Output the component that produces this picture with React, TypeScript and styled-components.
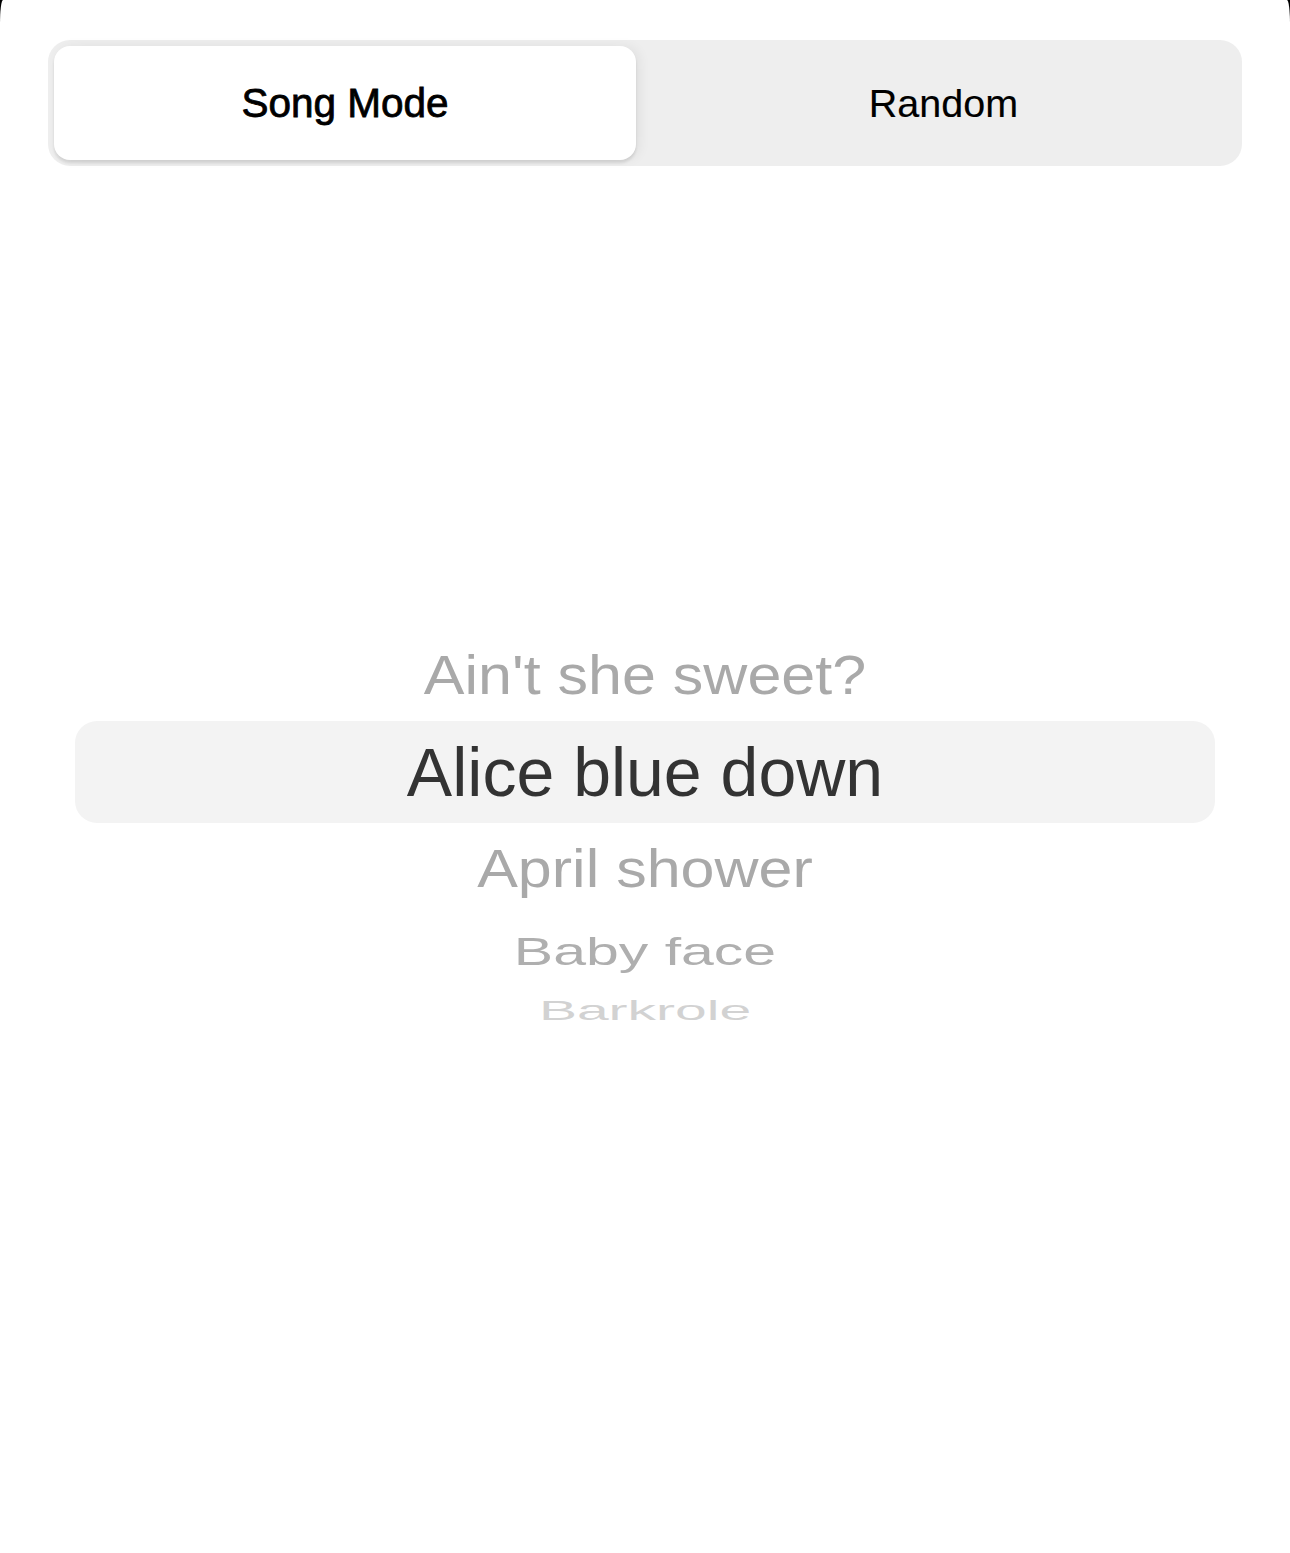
import React from "react";
import styled, { createGlobalStyle } from "styled-components";

const Global = createGlobalStyle`
  html, body { margin: 0; padding: 0; background: #000; }
  body { font-family: "Liberation Sans", Arial, sans-serif; }
  #root { min-height: 100vh; }
`;

const Sheet = styled.div`
  min-height: 1553px;
  background: #ffffff;
  border-top-left-radius: 3px 24px;
  border-top-right-radius: 3px 24px;
  display: flex;
  flex-direction: column;
  padding: 40px 48px 0 48px;
  box-sizing: border-box;
`;

const Segmented = styled.div`
  display: grid;
  grid-template-columns: 1fr 1fr;
  height: 126px;
  padding: 6px;
  box-sizing: border-box;
  background: #eeeeee;
  border-radius: 22px;
`;

const Segment = styled.div<{ $active?: boolean }>`
  display: flex;
  align-items: center;
  justify-content: center;
  border-radius: 16px;
  font-size: ${(p) => (p.$active ? "40.5px" : "39.5px")};
  font-weight: 400;
  -webkit-text-stroke: ${(p) => (p.$active ? "0.8px #000" : "0.15px #000")};
  color: #000;
  background: ${(p) => (p.$active ? "#ffffff" : "transparent")};
  box-shadow: ${(p) =>
    p.$active
      ? "0 3px 3px rgba(0,0,0,0.10), 4px 0 12px rgba(0,0,0,0.06)"
      : "none"};
  margin-right: ${(p) => (p.$active ? "9px" : "0")};
  padding-left: ${(p) => (p.$active ? "0" : "6px")};
`;

const Picker = styled.div`
  display: flex;
  flex-direction: column;
  margin: 463px 27px 0 27px;
`;

const Row = styled.div<{ $h: number; $selected?: boolean }>`
  height: ${(p) => p.$h}px;
  display: flex;
  align-items: center;
  justify-content: center;
  border-radius: 22px;
  background: ${(p) => (p.$selected ? "#f3f3f3" : "transparent")};
`;

const Label = styled.span<{ $size: number; $sy: number; $color: string }>`
  display: inline-block;
  font-size: ${(p) => p.$size}px;
  line-height: 1;
  color: ${(p) => p.$color};
  transform: scaleY(${(p) => p.$sy});
  white-space: nowrap;
`;

const rows = [
  { text: "Ain't she sweet?", h: 92, size: 61, sy: 0.92, color: "#a9a9a9" },
  { text: "Alice blue down", h: 102, size: 68, sy: 1.0, color: "#333333", selected: true },
  { text: "April shower", h: 92, size: 61, sy: 0.87, color: "#a9a9a9" },
  { text: "Baby face", h: 72, size: 59, sy: 0.67, color: "#afafaf" },
  { text: "Barkrole", h: 46, size: 57, sy: 0.5, color: "#d2d2d2" },
];

export default function App() {
  return (
    <>
      <Global />
      <Sheet>
        <Segmented>
          <Segment $active>Song Mode</Segment>
          <Segment>Random</Segment>
        </Segmented>
        <Picker>
          {rows.map((r) => (
            <Row key={r.text} $h={r.h} $selected={r.selected}>
              <Label $size={r.size} $sy={r.sy} $color={r.color}>
                {r.text}
              </Label>
            </Row>
          ))}
        </Picker>
      </Sheet>
    </>
  );
}
